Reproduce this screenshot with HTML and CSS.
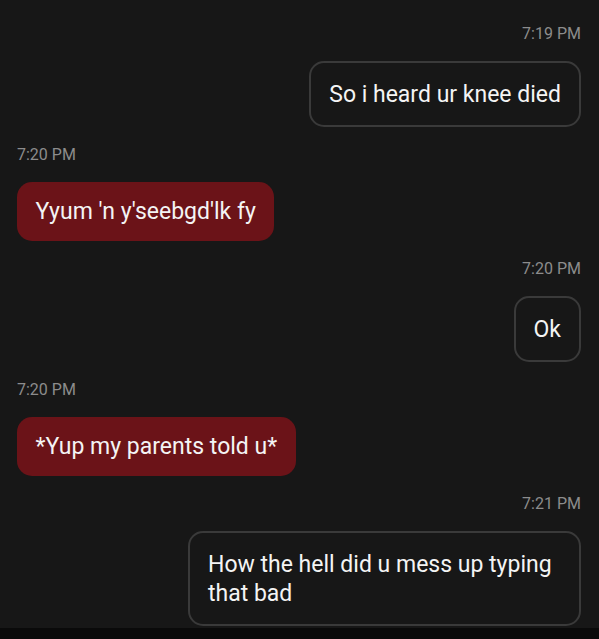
FILE: index.html
```html
<!DOCTYPE html>
<html lang="en">
<head>
    <meta charset="UTF-8">
    <meta name="viewport" content="width=device-width, initial-scale=1.0">
    <title>Messages</title>
    <link rel="stylesheet" href="styles.css">
</head>
<body>
    <div class="thread">
        <div class="msg sent">
            <div class="time">7:19 PM</div>
            <div class="bubble">So i heard ur knee died</div>
        </div>
        <div class="msg received">
            <div class="time">7:20 PM</div>
            <div class="bubble">Yyum 'n y'seebgd'lk fy</div>
        </div>
        <div class="msg sent">
            <div class="time">7:20 PM</div>
            <div class="bubble">Ok</div>
        </div>
        <div class="msg received">
            <div class="time">7:20 PM</div>
            <div class="bubble">*Yup my parents told u*</div>
        </div>
        <div class="msg sent">
            <div class="time">7:21 PM</div>
            <div class="bubble">How the hell did u mess up typing that bad</div>
        </div>
    </div>
    <div class="bottom-bar"></div>
</body>
</html>
```

FILE: styles.css
```css
html, body {
    margin: 0;
    padding: 0;
    background-color: #171717;
    font-family: Roboto, "Liberation Sans", Arial, sans-serif;
}

.thread {
    height: 628px;
    padding: 24px 18px 0 17px;
    box-sizing: border-box;
    display: flex;
    flex-direction: column;
    gap: 18px;
    overflow: hidden;
}

.msg {
    display: flex;
    flex-direction: column;
    gap: 17px;
}

.msg.sent {
    align-items: flex-end;
}

.msg.received {
    align-items: flex-start;
}

.time {
    font-size: 16px;
    line-height: 20px;
    color: #8c8c8c;
}

.bubble {
    font-size: 23px;
    line-height: 29px;
    color: #f4f4f4;
    border-radius: 15px;
    max-width: 393px;
    box-sizing: border-box;
}

.sent .bubble {
    border: 2px solid #3a3a3a;
    padding: 16.5px 18px;
    min-width: 65px;
}

.received .bubble {
    background-color: #6b1318;
    padding: 15px 18.5px;
}

.bottom-bar {
    height: 11px;
    background-color: #0a0a0a;
}
```
